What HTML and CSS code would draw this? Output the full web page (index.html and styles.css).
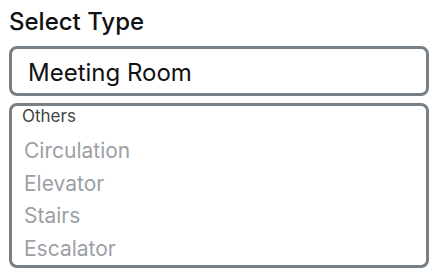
FILE: index.html
```html
<!DOCTYPE html>
<html lang="en">
<head>
    <meta charset="UTF-8">
    <meta name="viewport" content="width=device-width, initial-scale=1.0">
    <title>Select Type</title>
    <link rel="stylesheet" href="styles.css">
</head>
<body>
    <div class="field">
        <label class="field-label" for="typeInput">Select Type</label>
        <div class="type-input" id="typeInput">Meeting Room</div>
        <div class="type-list">
            <div class="group-label">Others</div>
            <div class="option">Circulation</div>
            <div class="option">Elevator</div>
            <div class="option">Stairs</div>
            <div class="option">Escalator</div>
        </div>
    </div>
</body>
</html>
```

FILE: styles.css
```css
body{
    margin: 0;
    padding: 8px 9px;
    font-family: Inter, "Noto Sans", sans-serif;
    background: #fff;
}
.field{
    display: flex;
    flex-direction: column;
}
.field-label{
    font-size: 24px;
    font-weight: 500;
    color: #111;
    line-height: 28px;
    margin-bottom: 10px;
}
.type-input{
    height: 44px;
    border: 3px solid #777f87;
    border-radius: 8px;
    padding: 3px 16px 0;
    box-sizing: content-box;
    height: 41px;
    display: flex;
    align-items: center;
    font-size: 24px;
    color: #111;
}
.type-list{
    margin-top: 7px;
    height: 159px;
    border: 3px solid #777f87;
    border-radius: 8px;
    padding: 0 0 0 10px;
    overflow: hidden;
}
.group-label{
    font-size: 17px;
    color: #444;
    line-height: 20px;
    margin-bottom: 9px;
}
.option{
    font-size: 21px;
    color: #9ca0a6;
    line-height: 32.6px;
    padding-left: 2px;
}
```
